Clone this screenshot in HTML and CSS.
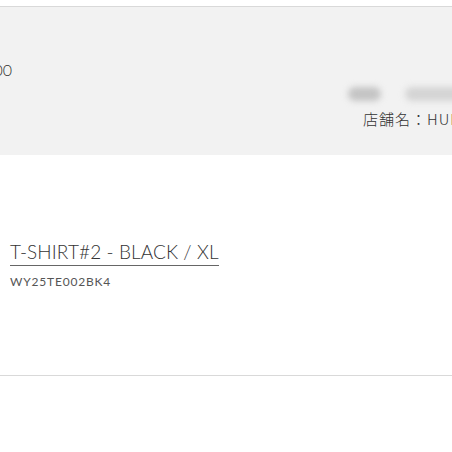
FILE: index.html
```html
<!DOCTYPE html>
<html lang="ja">
<head>
    <meta charset="UTF-8">
    <meta name="viewport" content="width=device-width, initial-scale=1.0">
    <title>Order</title>
    <link rel="stylesheet" href="styles.css">
</head>
<body>
    <div class="order">
        <div class="order-head">
            <div class="price">¥5,500</div>
            <div class="store">
                <div class="blurred">
                    <span class="pill pill-a"></span>
                    <span class="pill pill-b"></span>
                </div>
                <div class="store-name">店舗名：HUMAN MADE</div>
            </div>
        </div>

        <div class="item">
            <a class="item-title" href="#">T-SHIRT#2 - BLACK / XL</a>
            <div class="item-sku">WY25TE002BK4</div>
        </div>
    </div>
</body>
</html>
```

FILE: styles.css
```css
body {
    margin: 0;
    background: #fff;
    font-family: Lato, "Noto Sans CJK JP", sans-serif;
    color: #333;
    overflow: hidden;
}

.order {
    padding-top: 6px;
}

.order-head {
    display: flex;
    height: 148px;
    background: #f2f2f2;
    border-top: 1px solid #d9d9d9;
}

.price {
    width: 81px;
    margin-left: -69px;
    padding-top: 53px;
    text-align: right;
    font-size: 16px;
    font-weight: 300;
    color: #333;
}

.store {
    margin-left: auto;
    width: 107px;
    white-space: nowrap;
    padding-top: 76px;
}

.blurred {
    display: flex;
    gap: 24px;
    height: 22px;
    align-items: center;
}

.pill {
    display: block;
    flex-shrink: 0;
    height: 14px;
    border-radius: 7px;
    background: #c4c4c4;
    filter: blur(3px);
}

.pill-a {
    width: 33px;
    margin-left: 3px;
}

.pill-b {
    width: 60px;
    background: #d4d4d4;
}

.store-name {
    padding-left: 18px;
    margin-top: 3px;
    font-family: "Noto Sans CJK JP", sans-serif;
    font-size: 15px;
    font-weight: 300;
    letter-spacing: 1px;
    color: #333;
}

.item {
    height: 221px;
    padding: 84px 10px 0;
    box-sizing: border-box;
    border-bottom: 1px solid #d9d9d9;
}

.item-title {
    display: inline-block;
    font-size: 19px;
    font-weight: 300;
    letter-spacing: 0.1px;
    color: #333;
    text-decoration: none;
    border-bottom: 1px solid #666;
    line-height: 26px;
}

.item-sku {
    margin-top: 8px;
    font-size: 12px;
    letter-spacing: 0.8px;
    color: #555;
}
```
